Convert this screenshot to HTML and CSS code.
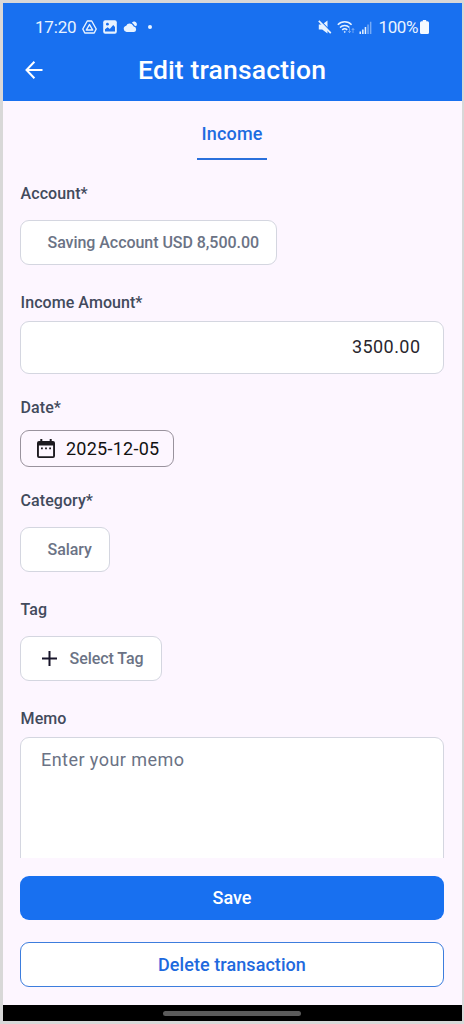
FILE: index.html
```html
<!DOCTYPE html>
<html lang="en">
<head>
<meta charset="utf-8">
<title>Edit transaction</title>
<link rel="stylesheet" href="styles.css">
</head>
<body>
<div class="phone">
  <header class="header">
    <div class="status">
      <span class="time">17:20</span>
      <svg class="ic-drive" width="15" height="14" viewBox="0 0 15 14" fill="none" stroke="#e8f3ff" stroke-width="1.4" stroke-linejoin="round"><path d="M5.3 1h4.4l4.5 8-2 4H2.8l-2-4z"/><path d="M7.5 4.600 10.700 10H4.300z"/></svg>
      <svg class="ic-image" width="14" height="14" viewBox="0 0 14 14"><rect x=".2" y=".2" width="13.6" height="13.6" rx="2" fill="#e8f3ff"/><circle cx="4.4" cy="4.2" r="1.4" fill="#1870f0"/><path d="M2 11.500V9.200l2.600-1.900 2.200 1.800 3.400-4L12 7v4.500z" fill="#1870f0"/></svg>
      <svg class="ic-cloud" width="15" height="12" viewBox="0 0 15 12" fill="#e8f3ff"><path d="M3.600 11a3.200 3.200 0 0 1-.4-6.300A3.900 3.900 0 0 1 10 4.400l.7 1.100a2.800 2.800 0 0 1 .3 5.500z"/><path d="M8.900 1.800a2.700 2.700 0 1 1 4 3.500l-1.500-.7A5 5 0 0 0 8.900 1.800z"/></svg>
      <span class="dot"></span>
      <span class="spacer"></span>
      <svg class="ic-mute" width="14" height="14" viewBox="0 0 14 14"><path d="M.8 4.400h3.400L9.500.500v13L4.200 9.600H.8z" fill="#e8f3ff"/><path d="M1.800.1 14 12.500" stroke="#1870f0" stroke-width="1.200"/><path d="M.8.900 12.800 13.100" stroke="#e8f3ff" stroke-width="1.700"/></svg>
      <svg class="ic-wifi" width="18" height="14" viewBox="0 0 18 14" fill="none" stroke="#e8f3ff" stroke-width="1.500"><path d="M.8 4.800a9.500 9.500 0 0 1 13.800 0M3 7.500a6.600 6.600 0 0 1 9.400 0M5.200 9.900a3.600 3.600 0 0 1 5 0"/><circle cx="7.700" cy="11.900" r=".6" fill="#e8f3ff" stroke-width=".6"/><path d="M12.500 8v4.500M11 11l1.500 1.700L14 11M16 13V8.500M14.700 10 16 8.500l1.300 1.500" stroke-width=".9" opacity=".45"/></svg>
      <svg class="ic-signal" width="13" height="13" viewBox="0 0 13 13" fill="#e8f3ff"><path d="M.5 10.500H2V13H.5zM3.100 8.500h1.500V13H3.100zM5.700 6h1.500v7H5.700z"/><path d="M8.300 3.500h1.500V13H8.300zM10.900.800h1.500V13h-1.500z" opacity=".45"/></svg>
      <span class="pct">100%</span>
      <svg class="ic-batt" width="9" height="14" viewBox="0 0 9 14" fill="#f4faff"><path d="M2.800 0h3.400v1.300H7.500A1.500 1.500 0 0 1 9 2.800v9.700A1.500 1.500 0 0 1 7.500 14h-6A1.500 1.500 0 0 1 0 12.500V2.800a1.500 1.500 0 0 1 1.500-1.500h1.300z"/></svg>
    </div>
    <div class="titlebar">
      <svg class="back" width="18" height="18" viewBox="0 0 18 18" fill="none" stroke="#fff" stroke-width="2"><path d="M9.400.8 1.500 9l7.900 8.200M1.800 9H17.500"/></svg>
      <h1 class="title">Edit transaction</h1>
    </div>
  </header>
  <main class="form">
    <div class="tabs"><span class="tab">Income</span></div>
    <label class="label label-account">Account*</label>
    <div class="chip chip-account"><span>Saving Account USD 8,500.00</span></div>
    <label class="label label-amount">Income Amount*</label>
    <div class="amount"><span>3500.00</span></div>
    <label class="label label-date">Date*</label>
    <div class="date">
      <svg width="18" height="19" viewBox="0 0 18 19"><path fill="#1d1a20" fill-rule="evenodd" d="M3.300 0h2v2h7.400V0h2v2H16a2 2 0 0 1 2 2v13a2 2 0 0 1-2 2H2a2 2 0 0 1-2-2V4a2 2 0 0 1 2-2h1.300zM1.900 6.600V17.200h14.200V6.600z"/><path fill="#1d1a20" d="M4 8.400h1.800v1.800H4zM8.100 8.400h1.800v1.800H8.100zM12.200 8.400H14v1.800h-1.800z"/></svg>
      <span>2025-12-05</span>
    </div>
    <label class="label label-category">Category*</label>
    <div class="chip chip-category"><span>Salary</span></div>
    <label class="label label-tag">Tag</label>
    <div class="chip chip-tag">
      <svg width="15" height="15" viewBox="0 0 15 15" fill="none" stroke="#18152a" stroke-width="2"><path d="M7.500 0v15M0 7.500h15"/></svg>
      <span>Select Tag</span>
    </div>
    <label class="label label-memo">Memo</label>
    <div class="memo"><span>Enter your memo</span></div>
  </main>
  <footer class="actions">
    <div class="btn save"><span>Save</span></div>
    <div class="btn delete"><span>Delete transaction</span></div>
  </footer>
  <div class="navbar"><span class="handle"></span></div>
</div>
</body>
</html>
```
FILE: styles.css
```css
* { box-sizing: border-box; }
body { margin: 0; background: #d8d8d8; font-family: Roboto, "Liberation Sans", sans-serif; }
.phone { width: 464px; height: 1024px; border: solid #d8d8d8; border-width: 3px 2px 3px 3px; display: flex; flex-direction: column; background: #fdf6ff; overflow: hidden; }
.phone span { white-space: nowrap; }
.header { height: 98px; background: #1870f0; flex: none; }
.status { height: 48px; display: flex; align-items: center; padding: 0 33px 0 32px; color: #e8f3ff; font-size: 17px; }
.time { width: 41px; letter-spacing: -.2px; }
.ic-drive { margin-left: 6px; }
.ic-image { margin-left: 6px; }
.ic-cloud { margin-left: 6px; }
.dot { width: 4px; height: 4px; border-radius: 50%; background: #e8f3ff; margin-left: 10px; }
.spacer { flex: 1; }
.ic-wifi { margin-left: 5px; }
.ic-signal { margin-left: 4px; }
.pct { margin-left: 6px; margin-right: 2px; letter-spacing: -.4px; }
.titlebar { height: 38px; display: flex; align-items: center; }
.back { margin-left: 22px; }
.title { margin: 0 0 0 95px; font-size: 26.5px; line-height: 38px; font-weight: 500; color: #fff; white-space: nowrap; letter-spacing: .15px; }
.form { height: 757px; padding: 0 17px; display: flex; flex-direction: column; align-items: flex-start; overflow: hidden; flex: none; }
.tabs { align-self: stretch; display: flex; justify-content: center; height: 59px; flex: none; padding-right: 1px; }
.tab { width: 70px; border-bottom: 2px solid #2a70dc; text-align: center; font-size: 18px; font-weight: 500; line-height: 66px; color: #1e6be0; letter-spacing: .2px; }
.label { font-size: 16px; font-weight: 500; line-height: 20px; height: 20px; padding-left: .6px; flex: none; color: #424a5c; letter-spacing: .06px; }
.label-account { margin-top: 24px; }
.label-amount { margin-top: 28px; }
.label-date { margin-top: 24px; }
.label-category { margin-top: 24px; }
.label-tag { margin-top: 28px; }
.label-memo { margin-top: 28px; }
.chip { height: 45px; flex: none; margin-top: 16px; border: 1px solid #d4d6e0; border-radius: 9px; background: #fff; display: flex; align-items: center; color: #6b7385; font-size: 16px; font-weight: 500; letter-spacing: -.05px; }
.chip-account { width: 257px; padding-left: 26.500px; }
.chip-category { width: 90px; padding-left: 26.500px; padding-bottom: 1px; }
.chip-tag { width: 142px; padding-left: 21px; gap: 12.500px; }
.amount { width: 424px; height: 53px; flex: none; margin-top: 8px; border: 1px solid #d4d6e0; border-radius: 9px; background: #fff; display: flex; align-items: center; justify-content: flex-end; padding: 0 22.500px 2px 0; font-size: 18px; letter-spacing: .45px; color: #29262d; }
.date { width: 154px; height: 37px; flex: none; margin-top: 12px; border: 1px solid #99929d; border-radius: 9px; display: flex; align-items: center; padding: 0 0 1px 16px; gap: 11px; font-size: 18px; color: #111; letter-spacing: .25px; }
.memo { width: 424px; height: 160px; flex: none; margin-top: 8px; border: 1px solid #d4d6e0; border-radius: 9px; background: #fff; padding: 11px 20px; font-size: 18px; line-height: 22px; color: #6b7385; letter-spacing: .45px; }
.actions { height: 147px; padding: 18px 17px 0; flex: none; }
.btn { width: 424px; height: 44px; border-radius: 9px; display: flex; align-items: center; justify-content: center; font-size: 18px; font-weight: 500; }
.save { background: #1870f0; color: #fff; padding-bottom: 1px; }
.delete { height: 45px; margin-top: 22px; background: #fff; border: 1px solid #3d7ddd; color: #1e69de; letter-spacing: .07px; }
.navbar { height: 16px; flex: none; background: #000; display: flex; align-items: center; justify-content: center; padding-right: 1px; }
.handle { width: 138px; height: 5px; border-radius: 3px; background: #5b5b5b; }
```
